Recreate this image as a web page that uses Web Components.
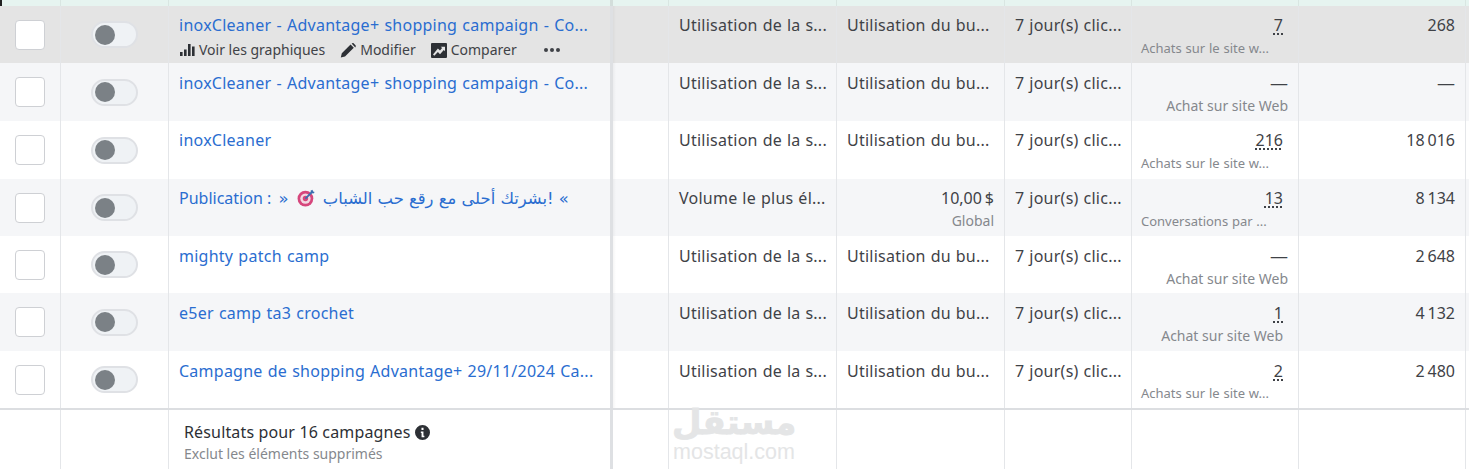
<!DOCTYPE html>
<html lang="fr">
<head>
<meta charset="utf-8">
<title>Campagnes</title>
<style>
  html, body { margin: 0; padding: 0; background: #fff; }
  body { width: 1469px; height: 469px; overflow: hidden; font-family: "Noto Sans", Roboto, sans-serif; color: #2d3035; }
</style>
</head>
<body>
<campaign-table>
  <campaign-row style="--row-h:57px;--pad:9px" name="inoxCleaner - Advantage+ shopping campaign - Co..." tone="hover" strategy="Utilisation de la s..." budget="Utilisation du bu..." result="7" result-label="Achats sur le site w..." reach="268"></campaign-row>
  <campaign-row style="--row-h:58px;--pad:10px;--sub-gap:3px" name="inoxCleaner - Advantage+ shopping campaign - Co..." tone="alt" strategy="Utilisation de la s..." budget="Utilisation du bu..." result="—" result-label="Achat sur site Web" reach="—"></campaign-row>
  <campaign-row style="--row-h:58px;--pad:9px" name="inoxCleaner" strategy="Utilisation de la s..." budget="Utilisation du bu..." result="216" result-label="Achats sur le site w..." reach="18 016"></campaign-row>
  <campaign-row style="--row-h:57px;--pad:9px" tone="alt" strategy="Volume le plus él..." amount="10,00 $" amount-label="Global" result="13" result-label="Conversations par ..." reach="8 134">
    <span slot="name" style="word-spacing:0;letter-spacing:0">Publication : <bdi dir="rtl" style="font-family:'DejaVu Sans',sans-serif;font-size:16.4px;margin-left:3px">» !بشرتك أحلى مع رقع حب الشباب <svg width="18" height="18" viewBox="0 0 16 16" style="vertical-align:-3px;margin:0 3px"><circle cx="7.5" cy="8.5" r="7" fill="#d6467c"/><circle cx="7.5" cy="8.5" r="4.6" fill="#f2d8e2"/><circle cx="7.5" cy="8.5" r="2.4" fill="#d6467c"/><path d="M7.5 8.5L14 2" stroke="#3b6fb0" stroke-width="1.6"/><path d="M12 1.5l.6 2 2 .6 1.2-1.4-1.6-.4-.4-1.6z" fill="#3b6fb0"/></svg> «</bdi></span>
  </campaign-row>
  <campaign-row style="--row-h:57px;--pad:10px;--sub-gap:3px" name="mighty patch camp" strategy="Utilisation de la s..." budget="Utilisation du bu..." result="—" result-label="Achat sur site Web" reach="2 648"></campaign-row>
  <campaign-row style="--row-h:58px;--pad:10px" name="e5er camp ta3 crochet" tone="alt" strategy="Utilisation de la s..." budget="Utilisation du bu..." result="1" result-label="Achat sur site Web" reach="4 132"></campaign-row>
  <campaign-row style="--row-h:57px;--pad:10px;--sub-gap:3px" name="Campagne de shopping Advantage+ 29/11/2024 Ca..." strategy="Utilisation de la s..." budget="Utilisation du bu..." result="2" result-label="Achats sur le site w..." reach="2 480"></campaign-row>
  <campaign-footer slot="footer" title-text="Résultats pour 16 campagnes" note="Exclut les éléments supprimés"></campaign-footer>
</campaign-table>

<script>
const COLUMNS = '61px 108px 444px 56px 168px 168px 127px 167px 167px 3px';

class CampaignTable extends HTMLElement {
  constructor() {
    super();
    this.attachShadow({ mode: 'open' });
    this.shadowRoot.innerHTML = `
      <style>
        :host { display: block; position: relative; width: 1469px; height: 469px; overflow: hidden; }
        .top { display: grid; grid-template-columns: ${COLUMNS}; height: 6px; background: #e6f4f0; }
        .top i { border-right: 1px solid #d9e6e2; }
        .top i:nth-child(3) { border-right: 3px solid #d3dedb; }
        .mark { position: absolute; left: 0; top: 0; width: 2px; height: 6px; background: #222; }
        .wm { position: absolute; left: 672px; top: 399px; width: 124px; text-align: center; color: #e4e5e6; pointer-events: none; }
        .wm b { display: block; font: bold 34px/46px "DejaVu Sans", sans-serif; -webkit-text-stroke: .8px #e4e5e6; }
        .wm span { display: block; font: 21.5px/15px "Liberation Sans", sans-serif; }
      </style>
      <div class="top"><i></i><i></i><i></i><i></i><i></i><i></i><i></i><i></i><i></i></div>
      <div class="mark"></div>
      <slot></slot>
      <slot name="footer"></slot>
      <div class="wm"><b>مستقل</b><span>mostaql.com</span></div>
    `;
  }
}

class CampaignToggle extends HTMLElement {
  constructor() {
    super();
    this.attachShadow({ mode: 'open' });
    this.shadowRoot.innerHTML = `
      <style>
        :host { display: block; box-sizing: border-box; width: 47px; height: 27px; border-radius: 14px; background: #eff2f5; border: 2px solid #dfe1e5; padding: 1.5px; }
        div { width: 20px; height: 20px; border-radius: 50%; background: #7b8186; }
      </style>
      <div></div>
    `;
  }
}

class CampaignRow extends HTMLElement {
  constructor() {
    super();
    this.attachShadow({ mode: 'open' });
  }

  connectedCallback() {
    const get = (n) => this.getAttribute(n) || '';
    const hover = get('tone') === 'hover';
    const budget = this.hasAttribute('amount')
      ? `<div class="right amount"><div>${get('amount')}</div><div class="sub">${get('amount-label')}</div></div>`
      : get('budget');
    const dash = get('result') === '—';
    const cut = get('result-label').endsWith('...');
    const actions = hover ? `
      <div class="actions">
        <span><svg width="16" height="14" viewBox="0 0 16 14"><path fill="#2d3035" d="M1 9h2.600v4H1zM5 6.500h2.600V13H5zM9 1h2.600v12H9zM13 3.500h2.600V13H13z"/></svg>Voir les graphiques</span>
        <span><svg width="16" height="15" viewBox="0 0 16 15"><path fill="#2d3035" d="M.8 14.500l1-4.200L10.600 1.500l3.200 3.200L5 13.500zM11.600.6l.8-.4c.5-.2 1-.1 1.400.3l1.700 1.700c.4.4.5.9.2 1.400l-.4.8z"/></svg>Modifier</span>
        <span><svg width="16" height="15" viewBox="0 0 16 15"><path fill="#2d3035" fill-rule="evenodd" d="M1 0h14a1 1 0 0 1 1 1v13a1 1 0 0 1-1 1H1a1 1 0 0 1-1-1V1a1 1 0 0 1 1-1zM2 11.500l1.300 1.200 3.600-3.600 2.100 2.100 3.800-4.200 1.200 1.200V3.700h-4.300l1.400 1.400-2.100 2.400-2.100-2.100z"/></svg>Comparer</span>
        <span class="more"><i></i><i></i><i></i></span>
      </div>` : '';
    this.shadowRoot.innerHTML = `
      <style>
        :host { display: grid; grid-template-columns: ${COLUMNS}; height: var(--row-h, 57px); font-size: 16px; line-height: 20px; background: #fff; color: #3f4247; }
        :host([tone="alt"]) { background: #f5f6f8; }
        :host([tone="hover"]) { background: #e4e4e4; }
        .c { box-sizing: border-box; border-right: 1px solid #e4e6e9; padding: var(--pad, 9px) 10px 0; white-space: nowrap; overflow: hidden; word-spacing: -1.2px; }
        .box { padding: 0; display: flex; align-items: center; }
        .box.chk { padding-left: 15px; }
        .box.tog { padding-left: 30px; }
        .chk div { box-sizing: border-box; width: 30px; height: 30px; border: 1px solid #ced0d4; border-radius: 4px; background: #fff; }
        .name { border-right: 3px solid #dee0e3; word-spacing: .7px; letter-spacing: .25px; }
        .name a { color: #2a6dd0; text-decoration: none; display: block; }
        .gap { background: linear-gradient(to right, rgba(0,0,0,.04), transparent 3px); }
        .text { word-spacing: .5px; letter-spacing: .25px; }
        .amount { word-spacing: -1.2px; letter-spacing: 0; }
        .actions { display: flex; align-items: center; font-size: 14px; margin-top: 5px; color: #3f4247; word-spacing: 0; letter-spacing: 0; }
        .actions span { display: inline-flex; align-items: center; gap: 4px; margin-right: 15px; }
        .more { margin-left: 12px; gap: 2px !important; }
        .more i { width: 4px; height: 4px; border-radius: 50%; background: #3f4247; }
        .right { text-align: right; }
        .big { font-size: 18px; }
        .sub { font-size: 14px; line-height: 18px; color: #85888d; margin-top: var(--sub-gap, 4px); word-spacing: 0; letter-spacing: 0; }
        .num u { text-decoration: underline dotted 1.5px; text-underline-offset: 2px; }
        .result { padding-right: 15px; padding-left: 9px; }
        .result.dash { padding-right: 10px; }
        .result .sub { text-align: right; }
        .result.cut .sub { text-align: left; font-size: 13px; word-spacing: .4px; }
      </style>
      <div class="c box chk"><div></div></div>
      <div class="c box tog"><campaign-toggle></campaign-toggle></div>
      <div class="c name"><a><slot name="name">${get('name')}</slot></a>${actions}</div>
      <div class="c gap"></div>
      <div class="c text">${get('strategy')}</div>
      <div class="c text">${budget}</div>
      <div class="c text">7 jour(s) clic...</div>
      <div class="c result num ${dash ? 'dash' : ''} ${cut ? 'cut' : ''}"><div class="right">${dash ? `<span class="big">${get('result')}</span>` : `<u>${get('result')}</u>`}</div><div class="sub">${get('result-label')}</div></div>
      <div class="c right">${get('reach') === '—' ? `<span class="big">—</span>` : get('reach')}</div>
      <div></div>
    `;
  }
}

class CampaignFooter extends HTMLElement {
  constructor() {
    super();
    this.attachShadow({ mode: 'open' });
  }

  connectedCallback() {
    this.shadowRoot.innerHTML = `
      <style>
        :host { display: grid; grid-template-columns: ${COLUMNS}; height: 61px; border-top: 2px solid #dcdee1; box-sizing: border-box; background: #fff; }
        .c { box-sizing: border-box; border-right: 1px solid #e4e6e9; }
        .c.main { border-right: 3px solid #dee0e3; padding: 12px 15px 0; }
        .t { font-size: 16px; line-height: 20px; color: #2d3035; display: flex; align-items: center; gap: 4px; letter-spacing: .15px; }
        .n { font-size: 14px; line-height: 18px; color: #85888d; margin-top: 3px; }
      </style>
      <div class="c"></div><div class="c"></div>
      <div class="c main">
        <div class="t">${this.getAttribute('title-text')}
          <svg width="15" height="15" viewBox="0 0 16 16"><path fill="#2d3035" fill-rule="evenodd" d="M8 0a8 8 0 1 1 0 16A8 8 0 0 1 8 0zM6.900 3v2.400h2.200V3zM6.200 7v1.500h.8V13h3v-1.500h-1V7z"/></svg>
        </div>
        <div class="n">${this.getAttribute('note')}</div>
      </div>
      <div class="c"></div><div class="c"></div><div class="c"></div><div class="c"></div><div class="c"></div><div class="c"></div><div></div>
    `;
  }
}

customElements.define('campaign-toggle', CampaignToggle);
customElements.define('campaign-row', CampaignRow);
customElements.define('campaign-footer', CampaignFooter);
customElements.define('campaign-table', CampaignTable);
</script>
</body>
</html>
